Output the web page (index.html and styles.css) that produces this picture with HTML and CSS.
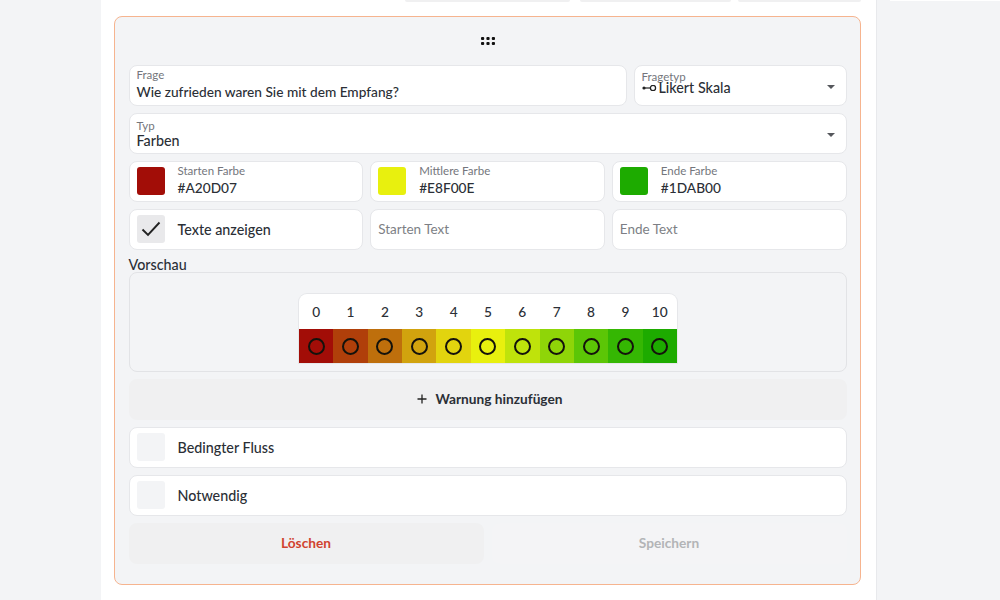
FILE: index.html
```html
<!DOCTYPE html>
<html lang="de">
<head>
    <meta charset="UTF-8">
    <meta name="viewport" content="width=device-width, initial-scale=1.0">
    <title>Frage bearbeiten</title>
    <link rel="stylesheet" href="styles.css">
</head>
<body>
    <main class="panel">
        <div class="tabs">
            <div class="tab tab-a"></div>
            <div class="tab tab-b"></div>
            <div class="tab tab-c"></div>
        </div>
        <section class="card">
            <div class="grip">
                <svg width="14" height="8" viewBox="0 0 14 8">
                    <g fill="#111">
                        <rect x="0" y="0" width="3.2" height="3" rx="1"/>
                        <rect x="5.4" y="0" width="3.2" height="3" rx="1"/>
                        <rect x="10.8" y="0" width="3.2" height="3" rx="1"/>
                        <rect x="0" y="5" width="3.2" height="3" rx="1"/>
                        <rect x="5.4" y="5" width="3.2" height="3" rx="1"/>
                        <rect x="10.8" y="5" width="3.2" height="3" rx="1"/>
                    </g>
                </svg>
            </div>
            <div class="form">
                <div class="row row-question">
                    <div class="field field-question">
                        <span class="label">Frage</span>
                        <span class="value">Wie zufrieden waren Sie mit dem Empfang?</span>
                    </div>
                    <div class="field field-select field-tight">
                        <span class="label">Fragetyp</span>
                        <span class="value value-icon">
                            <svg width="15" height="6" viewBox="0 0 15 6">
                                <circle cx="2" cy="3" r="1.6" fill="#222"/>
                                <path d="M3 3h5" stroke="#222" stroke-width="1.2"/>
                                <circle cx="11" cy="3" r="2.6" fill="none" stroke="#222" stroke-width="1.3"/>
                            </svg>
                            Likert Skala
                        </span>
                        <span class="caret"></span>
                    </div>
                </div>
                <div class="field field-select field-type">
                    <span class="label">Typ</span>
                    <span class="value">Farben</span>
                    <span class="caret"></span>
                </div>
                <div class="row row-three">
                    <div class="field field-box">
                        <span class="swatch swatch-start"></span>
                        <div class="box-text">
                            <span class="label">Starten Farbe</span>
                            <span class="value">#A20D07</span>
                        </div>
                    </div>
                    <div class="field field-box">
                        <span class="swatch swatch-middle"></span>
                        <div class="box-text">
                            <span class="label">Mittlere Farbe</span>
                            <span class="value">#E8F00E</span>
                        </div>
                    </div>
                    <div class="field field-box">
                        <span class="swatch swatch-end"></span>
                        <div class="box-text">
                            <span class="label">Ende Farbe</span>
                            <span class="value">#1DAB00</span>
                        </div>
                    </div>
                </div>
                <div class="row row-three">
                    <div class="field field-box">
                        <span class="check check-on">
                            <svg width="20" height="16" viewBox="0 0 20 16">
                                <path d="M1.5 8.5l5.5 5.5L18.5 1.5" fill="none" stroke="#222" stroke-width="1.9"/>
                            </svg>
                        </span>
                        <span class="check-label">Texte anzeigen</span>
                    </div>
                    <div class="field field-text"><span class="placeholder">Starten Text</span></div>
                    <div class="field field-text"><span class="placeholder">Ende Text</span></div>
                </div>
                <div class="preview-block">
                    <div class="preview-title">Vorschau</div>
                    <div class="preview">
                        <div class="scale">
                            <div class="scale-item"><span class="num">0</span><span class="cell step-0"><i></i></span></div>
                            <div class="scale-item"><span class="num">1</span><span class="cell step-1"><i></i></span></div>
                            <div class="scale-item"><span class="num">2</span><span class="cell step-2"><i></i></span></div>
                            <div class="scale-item"><span class="num">3</span><span class="cell step-3"><i></i></span></div>
                            <div class="scale-item"><span class="num">4</span><span class="cell step-4"><i></i></span></div>
                            <div class="scale-item"><span class="num">5</span><span class="cell step-5"><i></i></span></div>
                            <div class="scale-item"><span class="num">6</span><span class="cell step-6"><i></i></span></div>
                            <div class="scale-item"><span class="num">7</span><span class="cell step-7"><i></i></span></div>
                            <div class="scale-item"><span class="num">8</span><span class="cell step-8"><i></i></span></div>
                            <div class="scale-item"><span class="num">9</span><span class="cell step-9"><i></i></span></div>
                            <div class="scale-item"><span class="num">10</span><span class="cell step-10"><i></i></span></div>
                        </div>
                    </div>
                </div>
                <button class="btn btn-add">
                    <svg width="10" height="10" viewBox="0 0 10 10">
                        <path d="M5 0.5v9M0.5 5h9" stroke="#222" stroke-width="1.3"/>
                    </svg>
                    Warnung hinzufügen
                </button>
                <div class="field field-box">
                    <span class="check"></span>
                    <span class="check-label">Bedingter Fluss</span>
                </div>
                <div class="field field-box">
                    <span class="check"></span>
                    <span class="check-label">Notwendig</span>
                </div>
                <div class="actions">
                    <button class="btn btn-delete">Löschen</button>
                    <button class="btn btn-save">Speichern</button>
                </div>
            </div>
        </section>
    </main>
    <div class="side-strip"></div>
</body>
</html>
```

FILE: styles.css
```css
* {
    box-sizing: border-box;
}

body {
    font-family: Lato, "Open Sans", sans-serif;
    background-color: #f3f4f6;
    color: #2b2f36;
    margin: 0;
    padding: 0;
    height: 600px;
    overflow: hidden;
    display: flex;
    align-items: flex-start;
}

.panel {
    margin-left: 101px;
    width: 776px;
    height: 600px;
    background-color: #fff;
    border-right: 1px solid #e8e9ec;
    padding: 0 15px 0 13px;
    flex-shrink: 0;
}

.tabs {
    height: 2px;
    display: flex;
    margin-bottom: 14px;
}

.tab {
    height: 2px;
    background-color: #f0f0f1;
    border-radius: 0 0 5px 5px;
}

.tab-a {
    width: 165px;
    margin-left: 291px;
}

.tab-b {
    width: 152px;
    margin-left: 10px;
}

.tab-c {
    width: 123px;
    margin-left: 7px;
}

.card {
    height: 569px;
    background-color: #f3f4f6;
    border: 1.5px solid #f6b48f;
    border-radius: 8px;
    padding: 0 13.5px;
}

.grip {
    height: 48px;
    padding-top: 20px;
    display: flex;
    justify-content: center;
}

.form {
    display: flex;
    flex-direction: column;
    gap: 7px;
}

.row {
    display: grid;
    gap: 7px;
}

.row-question {
    grid-template-columns: 1fr 213px;
}

.row-three {
    grid-template-columns: repeat(3, 1fr);
}

.field {
    position: relative;
    height: 41px;
    background-color: #fff;
    border: 1px solid #e6e7ea;
    border-radius: 8px;
    padding: 4px 7px 0;
    display: flex;
    flex-direction: column;
}

.label {
    font-size: 11.5px;
    line-height: 14px;
    color: #74767c;
}

.value {
    font-size: 14.3px;
    line-height: 18px;
    font-weight: 500;
    color: #2b2f36;
}

.field-question {
    padding-top: 2px;
}

.field-question .value {
    font-size: 13.7px;
    margin-top: 1px;
}

.field-type {
    padding-top: 5px;
}

.field-type .value {
    margin-top: -1px;
}

/* Fragetyp: label and value sit almost on top of each other */
.field-tight {
    padding-top: 6px;
}

.field-tight .label {
    line-height: 10px;
}

.field-tight .value {
    line-height: 12px;
}

.value-icon {
    display: flex;
    align-items: center;
    gap: 2px;
}

.field-select .caret {
    position: absolute;
    right: 11px;
    top: 19px;
    border-left: 4px solid transparent;
    border-right: 4px solid transparent;
    border-top: 4px solid #55575c;
}

.field-box {
    flex-direction: row;
    align-items: center;
    gap: 13px;
    padding: 0 7px 1px;
}

.swatch,
.check {
    width: 28px;
    height: 28px;
    border-radius: 3px;
    flex-shrink: 0;
}

.swatch-start {
    background-color: #a20d07;
}

.swatch-middle {
    background-color: #e8f00e;
}

.swatch-end {
    background-color: #1dab00;
}

.check {
    background-color: #f3f4f6;
    display: flex;
    align-items: center;
    justify-content: center;
}

.check-on {
    background-color: #e9e9eb;
}

.box-text {
    display: flex;
    flex-direction: column;
    gap: 1px;
    margin-top: -2px;
}

.box-text .value {
    font-size: 13.7px;
}

.check-label {
    font-size: 14.3px;
    font-weight: 500;
    color: #2b2f36;
}

.field-text {
    justify-content: center;
    padding: 0 7px 1px;
}

.placeholder {
    font-size: 13.5px;
    color: #7d7f85;
}

.preview-title {
    font-size: 14.3px;
    line-height: 15px;
    font-weight: 500;
}

.preview {
    height: 100px;
    border: 1px solid #e2e3e6;
    border-radius: 8px;
    display: flex;
    justify-content: center;
    padding: 21px 0 0 1px;
}

.scale {
    display: flex;
    width: 378px;
    height: 69px;
    background-color: #fff;
    border-radius: 8px 8px 0 0;
    box-shadow: 0 0 0 1px #e6e7ea;
    overflow: hidden;
}

.scale-item {
    flex: 1;
    display: flex;
    flex-direction: column;
}

.num {
    height: 35px;
    font-size: 13.7px;
    font-weight: 500;
    display: flex;
    align-items: center;
    justify-content: center;
}

.cell {
    height: 34px;
    display: flex;
    align-items: center;
    justify-content: center;
}

.cell i {
    width: 17px;
    height: 17px;
    border: 2px solid #14120c;
    border-radius: 50%;
}

.step-0 { background-color: #a20d07; }
.step-1 { background-color: #b03f0a; }
.step-2 { background-color: #be6f0c; }
.step-3 { background-color: #d1a30e; }
.step-4 { background-color: #e2d40e; }
.step-5 { background-color: #e8f00e; }
.step-6 { background-color: #bfe30b; }
.step-7 { background-color: #8fd508; }
.step-8 { background-color: #5cc606; }
.step-9 { background-color: #35b703; }
.step-10 { background-color: #1dab00; }

.btn {
    height: 41px;
    border: none;
    border-radius: 8px;
    font-family: inherit;
    font-size: 13.7px;
    font-weight: 700;
    background-color: #f0f0f1;
    color: #2b2f36;
    padding: 0 0 2px;
    display: flex;
    align-items: center;
    justify-content: center;
}

.btn-add {
    gap: 9px;
    padding-left: 4px;
}

.actions {
    display: grid;
    grid-template-columns: 355px 1fr;
    gap: 8px;
}

.btn-delete {
    color: #d0432f;
}

.btn-save {
    background-color: #f4f4f6;
    color: #b3b4b7;
}

.side-strip {
    width: 110px;
    height: 1px;
    margin-left: 13px;
    background-color: #fff;
    flex-shrink: 0;
}
```
